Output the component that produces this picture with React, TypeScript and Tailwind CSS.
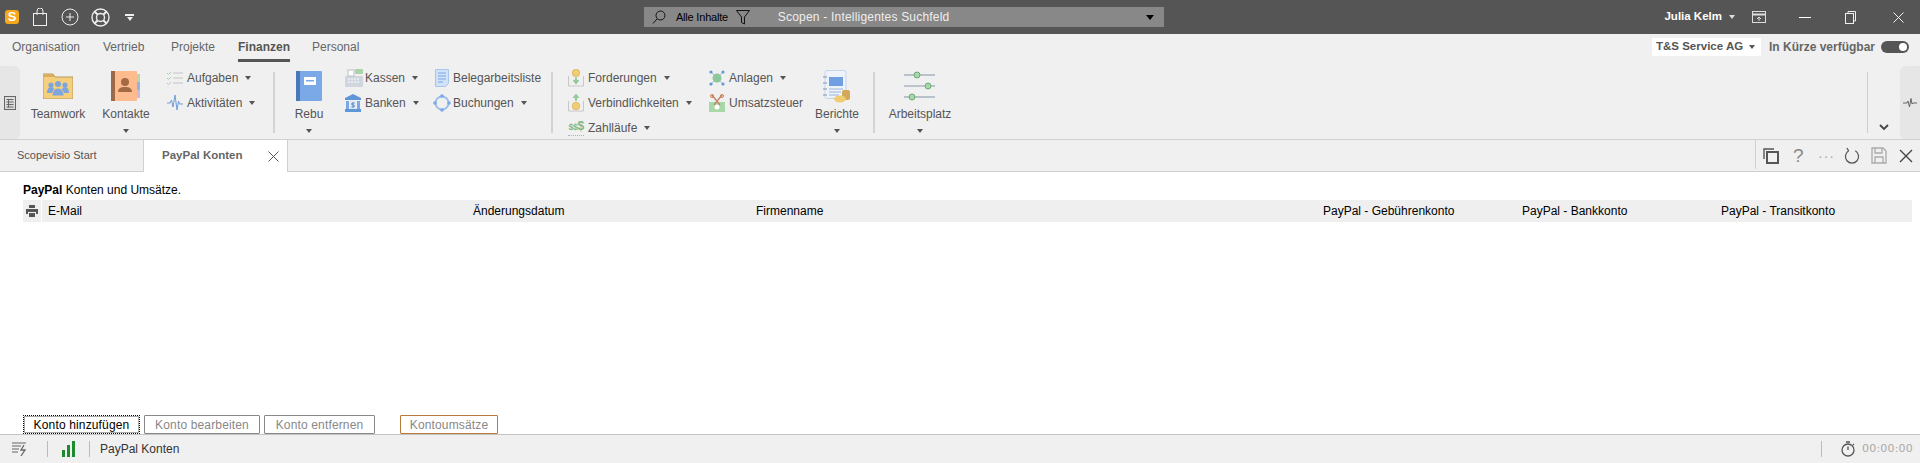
import type { ReactNode } from 'react';

const Caret = ({ className = 'border-t-[#555]' }: { className?: string }) => (
  <span className={`inline-block w-0 h-0 border-x-[3.5px] border-x-transparent border-t-[4px] ${className}`} />
);

const Sep = () => <div className="w-[2px] h-[61px] mt-[7px] bg-[#d4d4d4] shrink-0" />;

/* ---------- ribbon icons ---------- */
const TeamworkIcon = () => (
  <svg width="30" height="26" viewBox="0 0 30 26">
    <path d="M0 1h10l2 3h18v22H0z" fill="#f5cf7c" stroke="#b59a5e" />
    <path d="M0 1h10l2 3H0z" fill="#d9ae5e" />
    <g fill="#7ea6dc">
      <circle cx="8" cy="12" r="2.6" /><circle cx="22" cy="12" r="2.6" /><circle cx="15" cy="11" r="3" />
      <path d="M4 20c0-4 2-6 4-6s4 2 4 6zM18 20c0-4 2-6 4-6s4 2 4 6z" />
      <path d="M9 23c0-5 3-8 6-8s6 3 6 8z" stroke="#f5cf7c" />
    </g>
  </svg>
);
const KontakteIcon = () => (
  <svg width="30" height="30" viewBox="0 0 30 30">
    <rect x="25" y="3" width="4" height="8" fill="#b5d8a8" />
    <rect x="25" y="11" width="4" height="8" fill="#8fb4e8" />
    <rect x="25" y="19" width="4" height="8" fill="#cdb8e0" />
    <rect x="0" y="0" width="26" height="30" rx="1" fill="#fdbb8e" />
    <rect x="0" y="0" width="4" height="30" fill="#9a6a4a" />
    <circle cx="14" cy="11" r="4" fill="#a46a45" />
    <path d="M7 21c0-4 3-5 7-5s7 1 7 5z" fill="#a46a45" />
  </svg>
);
const RebuIcon = () => (
  <svg width="26" height="30" viewBox="0 0 26 30">
    <rect width="26" height="30" rx="1" fill="#7ba8e6" />
    <rect width="4" height="30" fill="#4a78b8" />
    <rect x="8" y="6" width="12" height="8" fill="#fff" />
    <rect x="10" y="9" width="8" height="1.5" fill="#7ba8e6" />
  </svg>
);
const BerichteIcon = () => (
  <svg width="28" height="33" viewBox="0 0 28 33">
    <rect x="2" y="0.5" width="21" height="28" rx="2" fill="#eef3fb" stroke="#c5d4ea" />
    <rect x="6" y="7" width="14" height="9" fill="#6f9fe0" />
    <path d="M6 19h14M6 22h12M6 25h10" stroke="#9db4d4" />
    <path d="M0 7h4M0 13h4M0 19h4M0 25h4" stroke="#7a93b8" />
    <rect x="19" y="20" width="8" height="10" rx="2" fill="#d4a85a" />
    <ellipse cx="17" cy="29" rx="6" ry="3.5" fill="#f0cd70" />
  </svg>
);
const ArbeitsplatzIcon = () => (
  <svg width="32" height="32" viewBox="0 0 32 32">
    <path d="M0 5h31" stroke="#b9c2cc" strokeWidth="2" />
    <path d="M0 16h31" stroke="#8a98a8" />
    <path d="M0 27h31" stroke="#b9c2cc" strokeWidth="2" />
    <circle cx="13" cy="5" r="3" fill="#a5d8a5" stroke="#6fa87a" />
    <circle cx="24" cy="16" r="3" fill="#a5d8a5" stroke="#6fa87a" />
    <circle cx="8" cy="27" r="3" fill="#a5d8a5" stroke="#6fa87a" />
  </svg>
);
const AufgabenIcon = () => (
  <svg width="16" height="14" viewBox="0 0 16 14" fill="none">
    <path d="M6 2h10M6 7h10M6 12h10" stroke="#c4c4c4" />
    <path d="M0 2l1.5 1.5L4 1M0 7l1.5 1.5L4 6M0 12l1.5 1.5L4 11" stroke="#a8d0b0" />
  </svg>
);
const AktivitaetenIcon = () => (
  <svg width="16" height="18" viewBox="0 0 16 18" fill="none">
    <path d="M0 9h3l1.5-3L6 13l2-12 2 15 1.5-9 1 3H16" stroke="#6f9fd8" />
  </svg>
);
const KassenIcon = () => (
  <svg width="18" height="18" viewBox="0 0 18 18">
    <rect x="0" y="7" width="18" height="11" rx="1" fill="#cfd6de" />
    <rect x="3" y="1" width="6" height="6" fill="#fff" stroke="#b8c0c8" />
    <rect x="10" y="0" width="8" height="5" rx="1" fill="#a8d4a8" />
    <path d="M3 10h12M3 13h12" stroke="#fff" strokeDasharray="2 1" />
  </svg>
);
const BankenIcon = () => (
  <svg width="16" height="18" viewBox="0 0 16 18">
    <path d="M8 0l8 4v2H0V4z" fill="#5f96d8" />
    <rect x="1" y="7" width="3" height="8" fill="#7ba8e6" />
    <rect x="12" y="7" width="3" height="8" fill="#7ba8e6" />
    <rect x="5" y="7" width="6" height="8" fill="#dce9f8" />
    <rect x="0" y="15" width="16" height="3" fill="#5f96d8" />
    <path d="M9.5 9H7v2h2v2H6.5" fill="none" stroke="#4a78b8" />
  </svg>
);
const BelegIcon = () => (
  <svg className="ml-[2px]" width="14" height="18" viewBox="0 0 14 18" fill="none">
    <path d="M0.5 0.5h13v14l-3 3h-10z" fill="#cfe2f8" stroke="#a9c6ea" />
    <path d="M3 4h8M3 7h8M3 10h8M3 13h5" stroke="#7ba8e6" />
  </svg>
);
const BuchungenIcon = () => (
  <svg width="18" height="18" viewBox="0 0 18 18" fill="none">
    <circle cx="9" cy="9" r="6.5" stroke="#9cc0ea" strokeWidth="2" />
    <circle cx="9" cy="2" r="1.8" fill="#7ba8e6" /><circle cx="9" cy="16" r="1.8" fill="#7ba8e6" />
    <circle cx="2" cy="9" r="1.8" fill="#7ba8e6" /><circle cx="16" cy="9" r="1.8" fill="#7ba8e6" />
  </svg>
);
const ForderungenIcon = () => (
  <svg width="16" height="18" viewBox="0 0 16 18" fill="none">
    <path d="M0.5 7v10h15V7" stroke="#c8c8c8" />
    <circle cx="8" cy="4" r="3.8" fill="#f0cd70" stroke="#d4a85a" strokeWidth="0.6" />
    <path d="M8 8.5v5M5.5 11L8 14l2.5-3" stroke="#8ec89a" strokeWidth="1.8" />
  </svg>
);
const VerbindlichIcon = () => (
  <svg width="16" height="18" viewBox="0 0 16 18" fill="none">
    <path d="M0.5 7v10h15V7" stroke="#c8c8c8" />
    <circle cx="8" cy="12" r="3.8" fill="#f0cd70" stroke="#d4a85a" strokeWidth="0.6" />
    <path d="M8 7V2M5.5 4L8 1l2.5 3" stroke="#8ec89a" strokeWidth="1.8" />
  </svg>
);
const ZahllaeufeIcon = () => (
  <span className="flex flex-col items-center w-[16px] leading-none">
    <span className="font-bold text-[#7cb98a] tracking-[-0.5px] leading-[12px] whitespace-nowrap">
      <span className="text-[9px]">$$</span>
      <span className="text-[12px]">$</span>
    </span>
    <span className="w-[16px] border-t border-dotted border-[#9db4d4] mt-[2px]" />
  </span>
);
const AnlagenIcon = () => (
  <svg width="16" height="16" viewBox="0 0 16 16" fill="none">
    <path d="M2 2l12 12M14 2L2 14" stroke="#a8c0dc" />
    <circle cx="8" cy="8" r="4.5" fill="#8ec89a" />
    <circle cx="2" cy="2" r="1.6" fill="#5f96d8" /><circle cx="14" cy="2" r="1.6" fill="#5f96d8" />
    <circle cx="2" cy="14" r="1.6" fill="#5f96d8" /><circle cx="14" cy="14" r="1.6" fill="#5f96d8" />
  </svg>
);
const UmsatzIcon = () => (
  <svg width="16" height="18" viewBox="0 0 16 18" fill="none">
    <rect x="0" y="8" width="16" height="10" fill="#a8d8a8" />
    <circle cx="8" cy="13" r="2.5" fill="#fff" />
    <path d="M3 1l8 10M13 1L5 11" stroke="#c08a6a" strokeWidth="1.5" />
    <circle cx="3" cy="2" r="1.5" stroke="#d07a50" /><circle cx="13" cy="2" r="1.5" stroke="#d07a50" />
  </svg>
);

/* ---------- ribbon items ---------- */
function Large({ icon, label, caret = true, width }: { icon: ReactNode; label: string; caret?: boolean; width: string }) {
  return (
    <div className={`flex flex-col items-center shrink-0 pt-[5px] ${width}`}>
      <div className="h-[32px] flex items-center justify-center">{icon}</div>
      <div className="h-[24px] flex items-center whitespace-nowrap">{label}</div>
      <div className="h-[10px] flex items-center">{caret && <Caret />}</div>
    </div>
  );
}

function Small({ icon, label, caret = true }: { icon: ReactNode; label: string; caret?: boolean }) {
  return (
    <div className="flex items-center h-[25px] whitespace-nowrap">
      <span className="w-[20px] flex items-center shrink-0">{icon}</span>
      {label}
      {caret && <span className="ml-[7px] flex"><Caret /></span>}
    </div>
  );
}

const tabs = [
  { label: 'Organisation', w: 'w-[91px]' },
  { label: 'Vertrieb', w: 'w-[68px]' },
  { label: 'Projekte', w: 'w-[67px]' },
  { label: 'Finanzen', w: 'w-[74px]', active: true },
  { label: 'Personal', w: 'w-[60px]' },
];

const columns = [
  { label: 'E-Mail', w: 'w-[425px]' },
  { label: 'Änderungsdatum', w: 'w-[283px]' },
  { label: 'Firmenname', w: 'w-[567px]' },
  { label: 'PayPal - Gebührenkonto', w: 'w-[199px]' },
  { label: 'PayPal - Bankkonto', w: 'w-[199px]' },
  { label: 'PayPal - Transitkonto', w: 'w-[185px]' },
];

export default function App() {
  return (
    <div className="h-[463px] w-[1920px] flex flex-col overflow-hidden bg-white text-[12px] text-[#555] font-['Liberation_Sans',sans-serif]">
      {/* Titelleiste */}
      <div className="h-[34px] bg-[#555] flex items-center shrink-0">
        <div className="flex items-center w-[644px] pl-[5px] shrink-0">
          <span className="w-[14px] h-[14px] rounded-[3px] bg-[#f5a81c] text-white font-bold text-[13px] leading-[14px] text-center">S</span>
          <svg className="ml-[14px]" width="14" height="18" viewBox="0 0 14 18" fill="none" stroke="#eee">
            <rect x="0.5" y="5.5" width="13" height="12" />
            <path d="M4 7V3a3 3 0 0 1 6 0v4" />
          </svg>
          <svg className="ml-[14px]" width="18" height="18" viewBox="0 0 18 18" fill="none" stroke="#eee">
            <circle cx="9" cy="9" r="8" />
            <path d="M9 5v8M5 9h8" />
          </svg>
          <svg className="ml-[12px]" width="19" height="19" viewBox="0 0 19 19" fill="none" stroke="#eee">
            <circle cx="9.5" cy="9.5" r="8.5" strokeWidth="1.4" />
            <circle cx="9.5" cy="9.5" r="4" strokeWidth="1.4" />
            <path d="M3.5 3.5l3 3M15.5 3.5l-3 3M3.5 15.5l3-3M15.5 15.5l-3-3" strokeWidth="2" />
          </svg>
          <span className="ml-[15px] flex flex-col items-center">
            <span className="w-[9px] h-[2px] bg-[#eee] mb-[1px]" />
            <Caret className="border-t-[#eee]" />
          </span>
        </div>

        {/* Suchfeld */}
        <div className="h-[20px] w-[520px] bg-[#888] flex items-center shrink-0 pl-[8px] pr-[10px]">
          <svg width="14" height="14" viewBox="0 0 14 14" fill="none" stroke="#111">
            <circle cx="8.5" cy="5.5" r="4.5" />
            <path d="M5 9l-4 4.5" />
          </svg>
          <span className="ml-[10px] w-[60px] text-black text-[11px] tracking-[-0.2px]">Alle Inhalte</span>
          <svg width="14" height="15" viewBox="0 0 14 15" fill="none" stroke="#111">
            <path d="M0.5 0.5h13L8.5 7v7l-3-1.5V7z" />
          </svg>
          <span className="ml-[28px] text-[#eee] w-[369px] tracking-[0.2px]">Scopen - Intelligentes Suchfeld</span>
          <Caret className="border-t-black border-x-[4px] border-t-[5px]" />
        </div>

        <div className="flex-1" />
        <span className="text-white font-bold text-[11.5px]">Julia Kelm</span>
        <span className="ml-[7px] flex"><Caret className="border-t-[#ddd]" /></span>
        <svg className="ml-[17px]" width="14" height="12" viewBox="0 0 14 12" fill="none" stroke="#ddd">
          <rect x="0.5" y="0.5" width="13" height="11" />
          <path d="M0.5 3.5h13" strokeWidth="2" />
          <path d="M7 10V6M5 8l2-2 2 2" />
        </svg>
        <span className="ml-[33px] w-[12px] h-px bg-white" />
        <svg className="ml-[34px]" width="11" height="13" viewBox="0 0 11 13" fill="none" stroke="#eee">
          <rect x="0.5" y="2.5" width="8" height="10" />
          <path d="M3 2.5v-2h7.5v9.5H8.5" />
        </svg>
        <svg className="ml-[37px] mr-[16px]" width="11" height="11" viewBox="0 0 11 11" stroke="#eee">
          <path d="M0.5 0.5l10 10M10.5 0.5l-10 10" />
        </svg>
      </div>

      {/* Modul-Tabs */}
      <div className="h-[31px] bg-[#f0f0f0] flex shrink-0 pl-[12px]">
        {tabs.map((t) => (
          <div key={t.label} className={`${t.w} h-full pt-[4px] shrink-0`}>
            <span className={`inline-block h-[23px] leading-[16px] ${t.active ? 'font-bold border-b-[3px] border-[#555]' : 'text-[#666]'}`}>
              {t.label}
            </span>
          </div>
        ))}
        <div className="flex-1" />
        <div className="h-[18px] w-[109px] mt-[4px] bg-white flex items-center pl-[4px] shrink-0">
          <span className="font-bold w-[93px] whitespace-nowrap text-[11.5px]">T&amp;S Service AG</span>
          <Caret />
        </div>
        <span className="ml-[8px] mt-[4px] h-[18px] leading-[18px] w-[112px] font-bold text-[#666] whitespace-nowrap">In Kürze verfügbar</span>
        <div className="mt-[7px] mr-[11px] w-[28px] h-[12px] rounded-full bg-[#555] flex items-center justify-end pr-[2px] shrink-0">
          <span className="w-[8px] h-[8px] rounded-full bg-white" />
        </div>
      </div>

      {/* Ribbon */}
      <div className="h-[75px] bg-[#f0f0f0] border-b border-[#d0d0d0] flex shrink-0">
        <div className="w-[20px] h-[73px] mt-[1px] bg-[#e6e6e6] rounded-r-[6px] flex items-center justify-center shrink-0">
          <svg width="12" height="14" viewBox="0 0 12 14" fill="none" stroke="#666">
            <rect x="0.5" y="0.5" width="11" height="13" fill="#ddd" />
            <path d="M2.5 3.5h7M2.5 6h7M2.5 8.5h7M2.5 11h7M4.5 3v8.5" />
          </svg>
        </div>

        <div className="ml-[8px] flex shrink-0">
          <Large width="w-[60px]" icon={<TeamworkIcon />} label="Teamwork" caret={false} />
          <div className="w-[8px]" />
          <Large width="w-[60px]" icon={<KontakteIcon />} label="Kontakte" />
        </div>
        <div className="ml-[11px] w-[106px] shrink-0">
          <Small icon={<AufgabenIcon />} label="Aufgaben" />
          <Small icon={<AktivitaetenIcon />} label="Aktivitäten" />
        </div>
        <Sep />
        <div className="ml-[4px]"><Large width="w-[60px]" icon={<RebuIcon />} label="Rebu" /></div>
        <div className="ml-[6px] w-[88px] shrink-0">
          <Small icon={<KassenIcon />} label="Kassen" />
          <Small icon={<BankenIcon />} label="Banken" />
        </div>
        <div className="w-[118px] shrink-0">
          <Small icon={<BelegIcon />} label="Belegarbeitsliste" caret={false} />
          <Small icon={<BuchungenIcon />} label="Buchungen" />
        </div>
        <Sep />
        <div className="ml-[15px] w-[141px] shrink-0">
          <Small icon={<ForderungenIcon />} label="Forderungen" />
          <Small icon={<VerbindlichIcon />} label="Verbindlichkeiten" />
          <Small icon={<ZahllaeufeIcon />} label="Zahlläufe" />
        </div>
        <div className="w-[105px] shrink-0">
          <Small icon={<AnlagenIcon />} label="Anlagen" />
          <Small icon={<UmsatzIcon />} label="Umsatzsteuer" caret={false} />
        </div>
        <Large width="w-[46px]" icon={<BerichteIcon />} label="Berichte" />
        <div className="ml-[13px]"><Sep /></div>
        <div className="ml-[10px]"><Large width="w-[70px]" icon={<ArbeitsplatzIcon />} label="Arbeitsplatz" /></div>

        <div className="flex-1" />
        <div className="w-px h-[61px] mt-[7px] bg-[#ccc] shrink-0" />
        <div className="w-[32px] shrink-0 flex items-end justify-center pb-[8px]">
          <svg width="10" height="7" viewBox="0 0 10 7" fill="none" stroke="#444" strokeWidth="1.8">
            <path d="M1 1l4 4 4-4" />
          </svg>
        </div>
        <div className="w-[20px] h-[73px] mt-[1px] bg-[#e6e6e6] rounded-l-[6px] flex items-center justify-center shrink-0">
          <svg width="14" height="10" viewBox="0 0 14 10" fill="none" stroke="#666">
            <path d="M0 5h4l1-2 1.5 6L8 0.5 9 6l1-1h4" />
          </svg>
        </div>
      </div>

      {/* Dokument-Tabs */}
      <div className="h-[32px] bg-[#f0f0f0] border-b border-[#d0d0d0] flex shrink-0 relative">
        <div className="w-[143px] pl-[17px] flex items-center text-[11px] shrink-0">Scopevisio Start</div>
        <div className="w-[145px] h-[32px] bg-white border-x border-[#d0d0d0] flex items-center pl-[18px] shrink-0">
          <span className="font-bold w-[106px] text-[#666] text-[11.5px]">PayPal Konten</span>
          <svg width="11" height="11" viewBox="0 0 11 11" stroke="#555">
            <path d="M0.5 0.5l10 10M10.5 0.5l-10 10" />
          </svg>
        </div>
        <div className="flex-1" />
        <div className="w-px h-[29px] bg-[#d0d0d0] shrink-0" />
        <div className="w-[164px] flex items-center pl-[7px] shrink-0">
          <svg width="16" height="16" viewBox="0 0 16 16" fill="none" stroke="#555" strokeWidth="1.4">
            <rect x="4" y="4" width="11" height="11" strokeWidth="2" />
            <path d="M11 1H1v10" />
          </svg>
          <span className="ml-[14px] w-[9px] text-[#888] text-[19px] font-light leading-none">?</span>
          <span className="ml-[16px] w-[14px] text-[#aaa] text-[14px] leading-none tracking-[1px]">···</span>
          <svg className="ml-[12px]" width="16" height="18" viewBox="0 0 17 18" fill="none" stroke="#555" strokeWidth="1.3">
            <path d="M5 3.5a7 7 0 1 0 7 0M5 3.5l-2-3" />
          </svg>
          <svg className="ml-[11px]" width="16" height="17" viewBox="0 0 16 17" fill="none" stroke="#aaa" strokeWidth="1.3">
            <path d="M1 1h11l3 3v12H1z" />
            <path d="M4 1v5h7V1M4 16v-6h8v6" />
          </svg>
          <svg className="ml-[12px]" width="14" height="14" viewBox="0 0 14 14" stroke="#444" strokeWidth="1.4">
            <path d="M1 1l12 12M13 1L1 13" />
          </svg>
        </div>
      </div>

      {/* Inhalt */}
      <div className="flex-1 flex flex-col pl-[23px] pr-[8px] min-h-0 text-black">
        <p className="pt-[10px] h-[28px] leading-[16px]">
          <span className="font-bold">PayPal</span> Konten und Umsätze.
        </p>
        <div className="h-[22px] flex items-center shrink-0">
          <div className="w-[18px] h-full bg-[#efefef] flex items-center justify-center shrink-0">
            <svg width="12" height="12" viewBox="0 0 12 12" fill="#555">
              <path d="M3 0h6v3H3zM0 4h12v5h-2V7H2v2H0zM3 8h6v4H3z" />
            </svg>
          </div>
          <div className="flex-1 ml-px h-full bg-[#efefef] flex items-center pl-[6px]">
            {columns.map((c) => (
              <span key={c.label} className={`${c.w} whitespace-nowrap shrink-0`}>{c.label}</span>
            ))}
          </div>
        </div>
        <div className="mt-auto flex h-[19px] shrink-0 text-[#888] tracking-[0.15px]">
          <button className="w-[117px] border border-dotted border-black text-black rounded-[1px] shadow-[inset_0_0_0_1px_#aaa]">Konto hinzufügen</button>
          <button className="ml-[4px] w-[116px] border border-[#888] rounded-[1px]">Konto bearbeiten</button>
          <button className="ml-[4px] w-[111px] border border-[#888] rounded-[1px]">Konto entfernen</button>
          <button className="ml-[25px] w-[98px] border border-[#b87a3a] rounded-[1px]">Kontoumsätze</button>
        </div>
      </div>

      {/* Statusleiste */}
      <div className="h-[29px] bg-[#f0f0f0] border-t border-[#c4c4c4] flex items-center shrink-0 text-[#333]">
        <svg className="ml-[12px]" width="15" height="16" viewBox="0 0 15 16" fill="none" stroke="#666">
          <path d="M0 2h14M0 5h9M0 8h7M0 11h6" />
          <path d="M12 4l-3 5h4l-4 6" strokeWidth="1.3" />
        </svg>
        <span className="ml-[20px] w-px h-[16px] bg-[#bbb]" />
        <span className="ml-[14px] flex items-end gap-[2px] h-[16px]">
          <span className="w-[3px] h-[7px] bg-[#1f8a2e]" />
          <span className="w-[3px] h-[12px] bg-[#1f8a2e]" />
          <span className="w-[3px] h-[16px] bg-[#1f8a2e]" />
        </span>
        <span className="ml-[14px] w-px h-[16px] bg-[#bbb]" />
        <span className="ml-[10px]">PayPal Konten</span>
        <div className="flex-1" />
        <span className="w-px h-[16px] bg-[#bbb]" />
        <svg className="ml-[19px]" width="14" height="16" viewBox="0 0 14 16" fill="none" stroke="#555" strokeWidth="1.3">
          <circle cx="7" cy="9" r="6" />
          <path d="M7 9V5.5M5 1h4M12 3l1 1" />
        </svg>
        <span className="ml-[7px] mr-[7px] text-[11px] text-[#aaa] font-['DejaVu_Sans',sans-serif] tracking-[0.2px]">00:00:00</span>
      </div>
    </div>
  );
}
